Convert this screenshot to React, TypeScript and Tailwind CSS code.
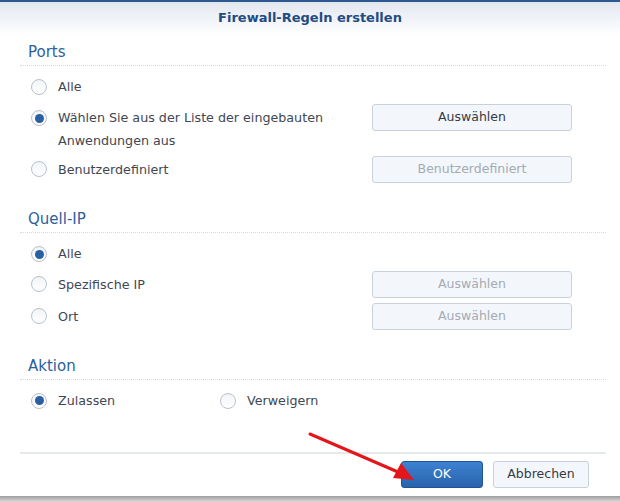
import React from 'react';

const font = { fontFamily: '"DejaVu Sans", Verdana, sans-serif' };

function Radio({ checked }: { checked?: boolean }) {
  return (
    <span className="flex h-[16px] w-[16px] shrink-0 items-center justify-center rounded-full border border-[#b8c2cd] bg-gradient-to-b from-[#f2f4f7] to-white">
      {checked && <span className="h-[9px] w-[9px] rounded-full bg-[#2b5fa3]" />}
    </span>
  );
}

function Btn({ label, disabled }: { label: string; disabled?: boolean }) {
  return (
    <div
      className={
        'flex h-[27px] w-[200px] items-center justify-center rounded-[3px] border border-[#c8d2dc] bg-[#f3f7fb] text-[12.5px] ' +
        (disabled ? 'text-[#a3abb4]' : 'text-[#333b45]')
      }
    >
      {label}
    </div>
  );
}

function SectionTitle({ text, mt }: { text: string; mt: string }) {
  return (
    <div className={'border-b border-dotted border-[#d6dbe0] pb-[3px] pl-[8px] text-[15px] leading-[20px] text-[#2d5f9c] ' + mt}>
      {text}
    </div>
  );
}

export default function App() {
  return (
    <div className="relative h-[502px] w-[620px] overflow-hidden bg-white text-[#3f4753]" style={font}>
      <div className="flex h-[496px] flex-col">
        {/* Kopfzeile */}
        <div className="flex h-[35px] items-center justify-center border-t-2 border-[#2c5a90] bg-gradient-to-b from-[#e2e7ef] to-white pb-[2px] text-[13px] font-bold text-[#1f4c82]">
          Firewall-Regeln erstellen
        </div>

        <div className="pl-[20px] pr-[14px]">
          <SectionTitle text="Ports" mt="mt-[7px]" />

          <div className="mt-[6px] flex h-[30px] items-center gap-[11px] pl-[11px] text-[12.7px]">
            <Radio />
            <span>Alle</span>
          </div>

          <div className="mt-[2px] flex items-start pl-[11px] pr-[34px]">
            <div className="flex flex-1 items-start gap-[11px] pt-[2px] text-[12.7px] leading-[23px]">
              <span className="mt-[4px]">
                <Radio checked />
              </span>
              <span>
                Wählen Sie aus der Liste der eingebauten
                <br />
                Anwendungen aus
              </span>
            </div>
            <Btn label="Auswählen" />
          </div>

          <div className="mt-[4px] flex h-[27px] items-center pl-[11px] pr-[34px]">
            <div className="flex flex-1 items-center gap-[11px] text-[12.7px]">
              <Radio />
              <span>Benutzerdefiniert</span>
            </div>
            <Btn label="Benutzerdefiniert" disabled />
          </div>

          <SectionTitle text="Quell-IP" mt="mt-[26px]" />

          <div className="mt-[6px] flex h-[30px] items-center gap-[11px] pl-[11px] text-[12.7px]">
            <Radio checked />
            <span>Alle</span>
          </div>

          <div className="mt-[2px] flex h-[27px] items-center pl-[11px] pr-[34px]">
            <div className="flex flex-1 items-center gap-[11px] text-[12.7px]">
              <Radio />
              <span>Spezifische IP</span>
            </div>
            <Btn label="Auswählen" disabled />
          </div>

          <div className="mt-[5px] flex h-[27px] items-center pl-[11px] pr-[34px]">
            <div className="flex flex-1 items-center gap-[11px] text-[12.7px]">
              <Radio />
              <span>Ort</span>
            </div>
            <Btn label="Auswählen" disabled />
          </div>

          <SectionTitle text="Aktion" mt="mt-[26px]" />

          <div className="mt-[6px] flex h-[30px] items-center pl-[11px] text-[12.7px]">
            <div className="flex w-[189px] items-center gap-[11px]">
              <Radio checked />
              <span>Zulassen</span>
            </div>
            <div className="flex items-center gap-[11px]">
              <Radio />
              <span>Verweigern</span>
            </div>
          </div>

          {/* Fußzeile */}
          <div className="mt-[36px] border-t-2 border-[#e6e9ec] pt-[7px]">
            <div className="flex justify-end gap-[10px] pr-[17px]">
              <div className="flex h-[27px] w-[82px] items-center justify-center rounded-[3px] border border-[#1f5396] bg-gradient-to-b from-[#3d82d2] to-[#2963ab] text-[12.5px] text-white">
                OK
              </div>
              <div className="flex h-[27px] w-[96px] items-center justify-center rounded-[3px] border border-[#c8d2dc] bg-[#f3f7fb] text-[12.5px] text-[#333b45]">
                Abbrechen
              </div>
            </div>
          </div>
        </div>
      </div>
      <div className="h-[6px] bg-gradient-to-b from-[#9c9c9c] to-[#dcdcdc]" />

      {/* Roter Pfeil */}
      <svg className="pointer-events-none absolute left-0 top-0" width="620" height="502">
        <line x1="310" y1="434" x2="398" y2="472" stroke="#e3161c" strokeWidth="3" strokeLinecap="round" />
        <polygon points="414,480 393,478 401,463" fill="#e3161c" />
      </svg>
    </div>
  );
}
